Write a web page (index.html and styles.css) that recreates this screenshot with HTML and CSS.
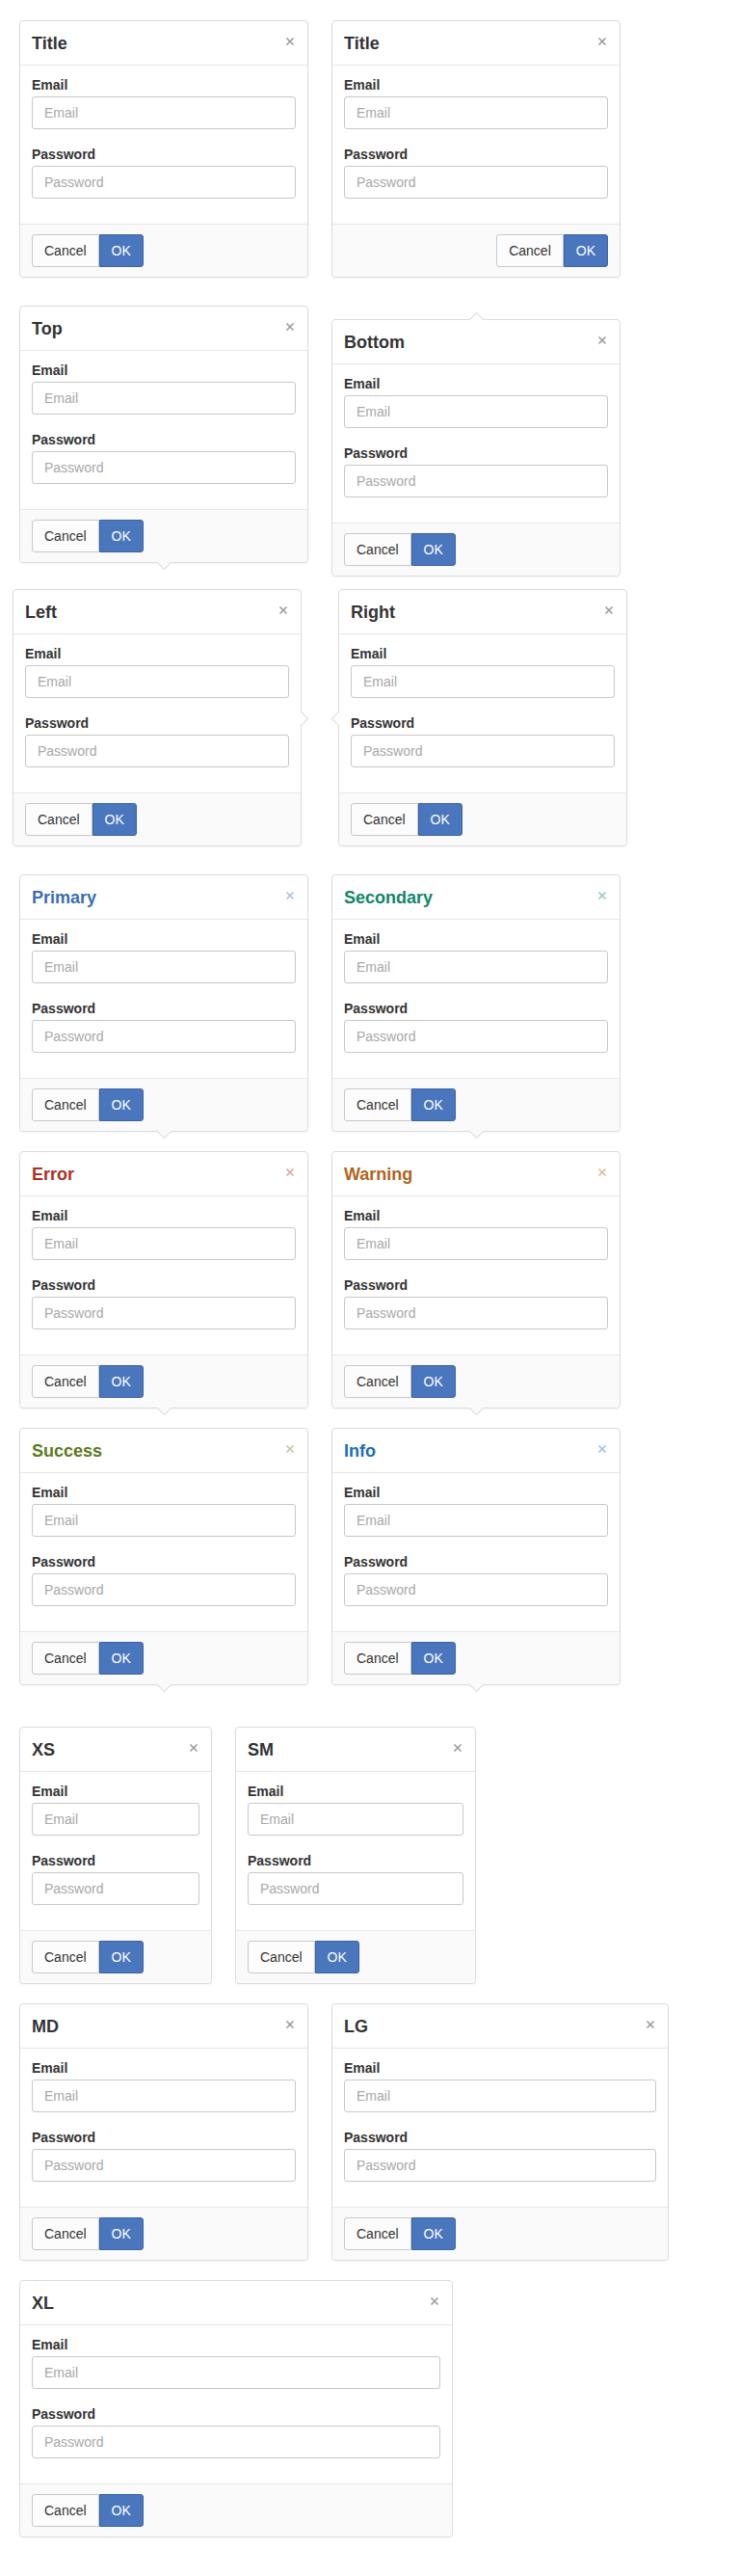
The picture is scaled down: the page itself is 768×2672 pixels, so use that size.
FILE: index.html
```html
<!DOCTYPE html>
<html lang="en">
<head>
<meta charset="utf-8">
<title>Popovers</title>
<link rel="stylesheet" href="styles.css">
</head>
<body>
<div class="page">

  <div class="row row-1">
    <div class="pop">
      <div class="pop-head"><h3 class="pop-title">Title</h3><span class="pop-close"><svg viewBox="0 0 10 10" width="10" height="10"><path d="M1.5 1.5 L8.5 8.5 M8.5 1.5 L1.5 8.5"/></svg></span></div>
      <div class="pop-body">
        <div class="field"><label class="field-label">Email</label><input class="field-input" placeholder="Email"></div>
        <div class="field"><label class="field-label">Password</label><input class="field-input" type="password" placeholder="Password"></div>
      </div>
      <div class="pop-foot"><div class="btn-group"><button class="btn">Cancel</button><button class="btn btn-primary">OK</button></div></div>
    </div>
    <div class="pop">
      <div class="pop-head"><h3 class="pop-title">Title</h3><span class="pop-close"><svg viewBox="0 0 10 10" width="10" height="10"><path d="M1.5 1.5 L8.5 8.5 M8.5 1.5 L1.5 8.5"/></svg></span></div>
      <div class="pop-body">
        <div class="field"><label class="field-label">Email</label><input class="field-input" placeholder="Email"></div>
        <div class="field"><label class="field-label">Password</label><input class="field-input" type="password" placeholder="Password"></div>
      </div>
      <div class="pop-foot pop-foot-end"><div class="btn-group"><button class="btn">Cancel</button><button class="btn btn-primary">OK</button></div></div>
    </div>
  </div>

  <div class="row row-2">
    <div class="pop arrow-down">
      <div class="pop-head"><h3 class="pop-title">Top</h3><span class="pop-close"><svg viewBox="0 0 10 10" width="10" height="10"><path d="M1.5 1.5 L8.5 8.5 M8.5 1.5 L1.5 8.5"/></svg></span></div>
      <div class="pop-body">
        <div class="field"><label class="field-label">Email</label><input class="field-input" placeholder="Email"></div>
        <div class="field"><label class="field-label">Password</label><input class="field-input" type="password" placeholder="Password"></div>
      </div>
      <div class="pop-foot"><div class="btn-group"><button class="btn">Cancel</button><button class="btn btn-primary">OK</button></div></div>
    </div>
    <div class="pop arrow-up pop-lower">
      <div class="pop-head"><h3 class="pop-title">Bottom</h3><span class="pop-close"><svg viewBox="0 0 10 10" width="10" height="10"><path d="M1.5 1.5 L8.5 8.5 M8.5 1.5 L1.5 8.5"/></svg></span></div>
      <div class="pop-body">
        <div class="field"><label class="field-label">Email</label><input class="field-input" placeholder="Email"></div>
        <div class="field"><label class="field-label">Password</label><input class="field-input" type="password" placeholder="Password"></div>
      </div>
      <div class="pop-foot"><div class="btn-group"><button class="btn">Cancel</button><button class="btn btn-primary">OK</button></div></div>
    </div>
  </div>

  <div class="row row-3">
    <div class="pop arrow-right pop-shift-left">
      <div class="pop-head"><h3 class="pop-title">Left</h3><span class="pop-close"><svg viewBox="0 0 10 10" width="10" height="10"><path d="M1.5 1.5 L8.5 8.5 M8.5 1.5 L1.5 8.5"/></svg></span></div>
      <div class="pop-body">
        <div class="field"><label class="field-label">Email</label><input class="field-input" placeholder="Email"></div>
        <div class="field"><label class="field-label">Password</label><input class="field-input" type="password" placeholder="Password"></div>
      </div>
      <div class="pop-foot"><div class="btn-group"><button class="btn">Cancel</button><button class="btn btn-primary">OK</button></div></div>
    </div>
    <div class="pop arrow-left">
      <div class="pop-head"><h3 class="pop-title">Right</h3><span class="pop-close"><svg viewBox="0 0 10 10" width="10" height="10"><path d="M1.5 1.5 L8.5 8.5 M8.5 1.5 L1.5 8.5"/></svg></span></div>
      <div class="pop-body">
        <div class="field"><label class="field-label">Email</label><input class="field-input" placeholder="Email"></div>
        <div class="field"><label class="field-label">Password</label><input class="field-input" type="password" placeholder="Password"></div>
      </div>
      <div class="pop-foot"><div class="btn-group"><button class="btn">Cancel</button><button class="btn btn-primary">OK</button></div></div>
    </div>
  </div>

  <div class="row row-4">
    <div class="pop arrow-down tone-primary">
      <div class="pop-head"><h3 class="pop-title">Primary</h3><span class="pop-close"><svg viewBox="0 0 10 10" width="10" height="10"><path d="M1.5 1.5 L8.5 8.5 M8.5 1.5 L1.5 8.5"/></svg></span></div>
      <div class="pop-body">
        <div class="field"><label class="field-label">Email</label><input class="field-input" placeholder="Email"></div>
        <div class="field"><label class="field-label">Password</label><input class="field-input" type="password" placeholder="Password"></div>
      </div>
      <div class="pop-foot"><div class="btn-group"><button class="btn">Cancel</button><button class="btn btn-primary">OK</button></div></div>
    </div>
    <div class="pop arrow-down tone-secondary">
      <div class="pop-head"><h3 class="pop-title">Secondary</h3><span class="pop-close"><svg viewBox="0 0 10 10" width="10" height="10"><path d="M1.5 1.5 L8.5 8.5 M8.5 1.5 L1.5 8.5"/></svg></span></div>
      <div class="pop-body">
        <div class="field"><label class="field-label">Email</label><input class="field-input" placeholder="Email"></div>
        <div class="field"><label class="field-label">Password</label><input class="field-input" type="password" placeholder="Password"></div>
      </div>
      <div class="pop-foot"><div class="btn-group"><button class="btn">Cancel</button><button class="btn btn-primary">OK</button></div></div>
    </div>
  </div>

  <div class="row row-5">
    <div class="pop arrow-down tone-error">
      <div class="pop-head"><h3 class="pop-title">Error</h3><span class="pop-close"><svg viewBox="0 0 10 10" width="10" height="10"><path d="M1.5 1.5 L8.5 8.5 M8.5 1.5 L1.5 8.5"/></svg></span></div>
      <div class="pop-body">
        <div class="field"><label class="field-label">Email</label><input class="field-input" placeholder="Email"></div>
        <div class="field"><label class="field-label">Password</label><input class="field-input" type="password" placeholder="Password"></div>
      </div>
      <div class="pop-foot"><div class="btn-group"><button class="btn">Cancel</button><button class="btn btn-primary">OK</button></div></div>
    </div>
    <div class="pop arrow-down tone-warning">
      <div class="pop-head"><h3 class="pop-title">Warning</h3><span class="pop-close"><svg viewBox="0 0 10 10" width="10" height="10"><path d="M1.5 1.5 L8.5 8.5 M8.5 1.5 L1.5 8.5"/></svg></span></div>
      <div class="pop-body">
        <div class="field"><label class="field-label">Email</label><input class="field-input" placeholder="Email"></div>
        <div class="field"><label class="field-label">Password</label><input class="field-input" type="password" placeholder="Password"></div>
      </div>
      <div class="pop-foot"><div class="btn-group"><button class="btn">Cancel</button><button class="btn btn-primary">OK</button></div></div>
    </div>
  </div>

  <div class="row row-6">
    <div class="pop arrow-down tone-success">
      <div class="pop-head"><h3 class="pop-title">Success</h3><span class="pop-close"><svg viewBox="0 0 10 10" width="10" height="10"><path d="M1.5 1.5 L8.5 8.5 M8.5 1.5 L1.5 8.5"/></svg></span></div>
      <div class="pop-body">
        <div class="field"><label class="field-label">Email</label><input class="field-input" placeholder="Email"></div>
        <div class="field"><label class="field-label">Password</label><input class="field-input" type="password" placeholder="Password"></div>
      </div>
      <div class="pop-foot"><div class="btn-group"><button class="btn">Cancel</button><button class="btn btn-primary">OK</button></div></div>
    </div>
    <div class="pop arrow-down tone-info">
      <div class="pop-head"><h3 class="pop-title">Info</h3><span class="pop-close"><svg viewBox="0 0 10 10" width="10" height="10"><path d="M1.5 1.5 L8.5 8.5 M8.5 1.5 L1.5 8.5"/></svg></span></div>
      <div class="pop-body">
        <div class="field"><label class="field-label">Email</label><input class="field-input" placeholder="Email"></div>
        <div class="field"><label class="field-label">Password</label><input class="field-input" type="password" placeholder="Password"></div>
      </div>
      <div class="pop-foot"><div class="btn-group"><button class="btn">Cancel</button><button class="btn btn-primary">OK</button></div></div>
    </div>
  </div>

  <div class="row row-7">
    <div class="pop pop-xs">
      <div class="pop-head"><h3 class="pop-title">XS</h3><span class="pop-close"><svg viewBox="0 0 10 10" width="10" height="10"><path d="M1.5 1.5 L8.5 8.5 M8.5 1.5 L1.5 8.5"/></svg></span></div>
      <div class="pop-body">
        <div class="field"><label class="field-label">Email</label><input class="field-input" placeholder="Email"></div>
        <div class="field"><label class="field-label">Password</label><input class="field-input" type="password" placeholder="Password"></div>
      </div>
      <div class="pop-foot"><div class="btn-group"><button class="btn">Cancel</button><button class="btn btn-primary">OK</button></div></div>
    </div>
    <div class="pop pop-sm">
      <div class="pop-head"><h3 class="pop-title">SM</h3><span class="pop-close"><svg viewBox="0 0 10 10" width="10" height="10"><path d="M1.5 1.5 L8.5 8.5 M8.5 1.5 L1.5 8.5"/></svg></span></div>
      <div class="pop-body">
        <div class="field"><label class="field-label">Email</label><input class="field-input" placeholder="Email"></div>
        <div class="field"><label class="field-label">Password</label><input class="field-input" type="password" placeholder="Password"></div>
      </div>
      <div class="pop-foot"><div class="btn-group"><button class="btn">Cancel</button><button class="btn btn-primary">OK</button></div></div>
    </div>
  </div>

  <div class="row row-8">
    <div class="pop pop-md">
      <div class="pop-head"><h3 class="pop-title">MD</h3><span class="pop-close"><svg viewBox="0 0 10 10" width="10" height="10"><path d="M1.5 1.5 L8.5 8.5 M8.5 1.5 L1.5 8.5"/></svg></span></div>
      <div class="pop-body">
        <div class="field"><label class="field-label">Email</label><input class="field-input" placeholder="Email"></div>
        <div class="field"><label class="field-label">Password</label><input class="field-input" type="password" placeholder="Password"></div>
      </div>
      <div class="pop-foot"><div class="btn-group"><button class="btn">Cancel</button><button class="btn btn-primary">OK</button></div></div>
    </div>
    <div class="pop pop-lg">
      <div class="pop-head"><h3 class="pop-title">LG</h3><span class="pop-close"><svg viewBox="0 0 10 10" width="10" height="10"><path d="M1.5 1.5 L8.5 8.5 M8.5 1.5 L1.5 8.5"/></svg></span></div>
      <div class="pop-body">
        <div class="field"><label class="field-label">Email</label><input class="field-input" placeholder="Email"></div>
        <div class="field"><label class="field-label">Password</label><input class="field-input" type="password" placeholder="Password"></div>
      </div>
      <div class="pop-foot"><div class="btn-group"><button class="btn">Cancel</button><button class="btn btn-primary">OK</button></div></div>
    </div>
  </div>

  <div class="row row-9">
    <div class="pop pop-xl">
      <div class="pop-head"><h3 class="pop-title">XL</h3><span class="pop-close"><svg viewBox="0 0 10 10" width="10" height="10"><path d="M1.5 1.5 L8.5 8.5 M8.5 1.5 L1.5 8.5"/></svg></span></div>
      <div class="pop-body">
        <div class="field"><label class="field-label">Email</label><input class="field-input" placeholder="Email"></div>
        <div class="field"><label class="field-label">Password</label><input class="field-input" type="password" placeholder="Password"></div>
      </div>
      <div class="pop-foot"><div class="btn-group"><button class="btn">Cancel</button><button class="btn btn-primary">OK</button></div></div>
    </div>
  </div>

</div>
</body>
</html>
```

FILE: styles.css
```css
* { box-sizing: border-box; }

html, body {
  margin: 0;
  padding: 0;
  background: #fff;
}

body {
  font-family: "Liberation Sans", Arial, Helvetica, sans-serif;
  font-size: 14px;
  color: #333;
}

.page {
  padding: 21px 0 40px 20px;
}

.row {
  display: flex;
  align-items: flex-start;
  gap: 24px;
}

.row-2 { margin-top: 29px; }
.row-3 { margin-top: 13px; gap: 38px; }
.row-4 { margin-top: 29px; }
.row-5 { margin-top: 20px; }
.row-6 { margin-top: 20px; }
.row-7 { margin-top: 43px; }
.row-8 { margin-top: 20px; }
.row-9 { margin-top: 20px; }

.pop-lower { margin-top: 14px; }
.pop-shift-left { margin-left: -7px; }

/* popover card */
.pop {
  position: relative;
  width: 300px;
  flex: none;
  background: #fff;
  border: 1px solid #dcdcdc;
  border-radius: 4px;
  box-shadow: 0 1px 2px rgba(0, 0, 0, 0.04);
}

.pop-xs { width: 200px; }
.pop-sm { width: 250px; }
.pop-md { width: 300px; }
.pop-lg { width: 350px; }
.pop-xl { width: 450px; }

.pop-head {
  display: flex;
  align-items: center;
  justify-content: space-between;
  padding: 13px 13px 11px 12px;
  border-bottom: 1px solid #e6e6e6;
}

.pop-title {
  margin: 0;
  font-size: 18px;
  line-height: 21px;
  font-weight: bold;
  color: #333;
}

.pop-close {
  display: block;
  width: 10px;
  height: 10px;
  margin-top: -5px;
  color: #9a9a9a;
}

.pop-close svg {
  display: block;
  fill: none;
  stroke: currentColor;
  stroke-width: 1.6;
}

.pop-body {
  padding: 12px 12px 26px;
}

.field + .field { margin-top: 18px; }

.field-label {
  display: block;
  font-weight: bold;
  font-size: 14px;
  line-height: 16px;
  margin-bottom: 4px;
  color: #333;
}

.field-input {
  display: block;
  width: 100%;
  height: 34px;
  margin: 0;
  padding: 0 12px;
  border: 1px solid #c8c8c8;
  border-radius: 3px;
  font-family: inherit;
  font-size: 14px;
  color: #333;
  background: #fff;
  outline: none;
}

.field-input::placeholder { color: #a8a8a8; }

.pop-foot {
  display: flex;
  padding: 10px 12px;
  background: #fafafa;
  border-top: 1px solid #e8e8e8;
  border-radius: 0 0 4px 4px;
}

.pop-foot-end { justify-content: flex-end; }

.btn-group { display: flex; }

.btn {
  height: 34px;
  margin: 0;
  padding: 0 12px;
  font-family: inherit;
  font-size: 14px;
  line-height: 20px;
  color: #333;
  background: #fcfcfc;
  border: 1px solid #c8c8c8;
  border-radius: 3px 0 0 3px;
}

.btn-primary {
  color: #fff;
  background: #4a76be;
  border-color: #3c64a6;
  border-radius: 0 3px 3px 0;
}

/* arrows */
.arrow-down::after,
.arrow-up::after,
.arrow-left::after,
.arrow-right::after {
  content: "";
  position: absolute;
  width: 10px;
  height: 10px;
  background: #fff;
  transform: rotate(45deg);
}

.arrow-down::after {
  left: 50%;
  bottom: -6px;
  margin-left: -5px;
  background: #fafafa;
  border-right: 1px solid #dcdcdc;
  border-bottom: 1px solid #dcdcdc;
}

.arrow-up::after {
  left: 50%;
  top: -6px;
  margin-left: -5px;
  border-left: 1px solid #dcdcdc;
  border-top: 1px solid #dcdcdc;
}

.arrow-right::after {
  top: 50%;
  right: -6px;
  margin-top: -5px;
  border-right: 1px solid #dcdcdc;
  border-top: 1px solid #dcdcdc;
}

.arrow-left::after {
  top: 50%;
  left: -6px;
  margin-top: -5px;
  border-left: 1px solid #dcdcdc;
  border-bottom: 1px solid #dcdcdc;
}

/* tones */
.tone-primary .pop-title { color: #3b6cb3; }
.tone-primary .pop-close { color: #a9bfe0; }
.tone-secondary .pop-title { color: #13856a; }
.tone-secondary .pop-close { color: #90cab9; }
.tone-error .pop-title { color: #a9331f; }
.tone-error .pop-close { color: #dca49b; }
.tone-warning .pop-title { color: #b1641b; }
.tone-warning .pop-close { color: #ddba96; }
.tone-success .pop-title { color: #5c7a1f; }
.tone-success .pop-close { color: #b9ca9b; }
.tone-info .pop-title { color: #1e6db3; }
.tone-info .pop-close { color: #9cc1e3; }
```
